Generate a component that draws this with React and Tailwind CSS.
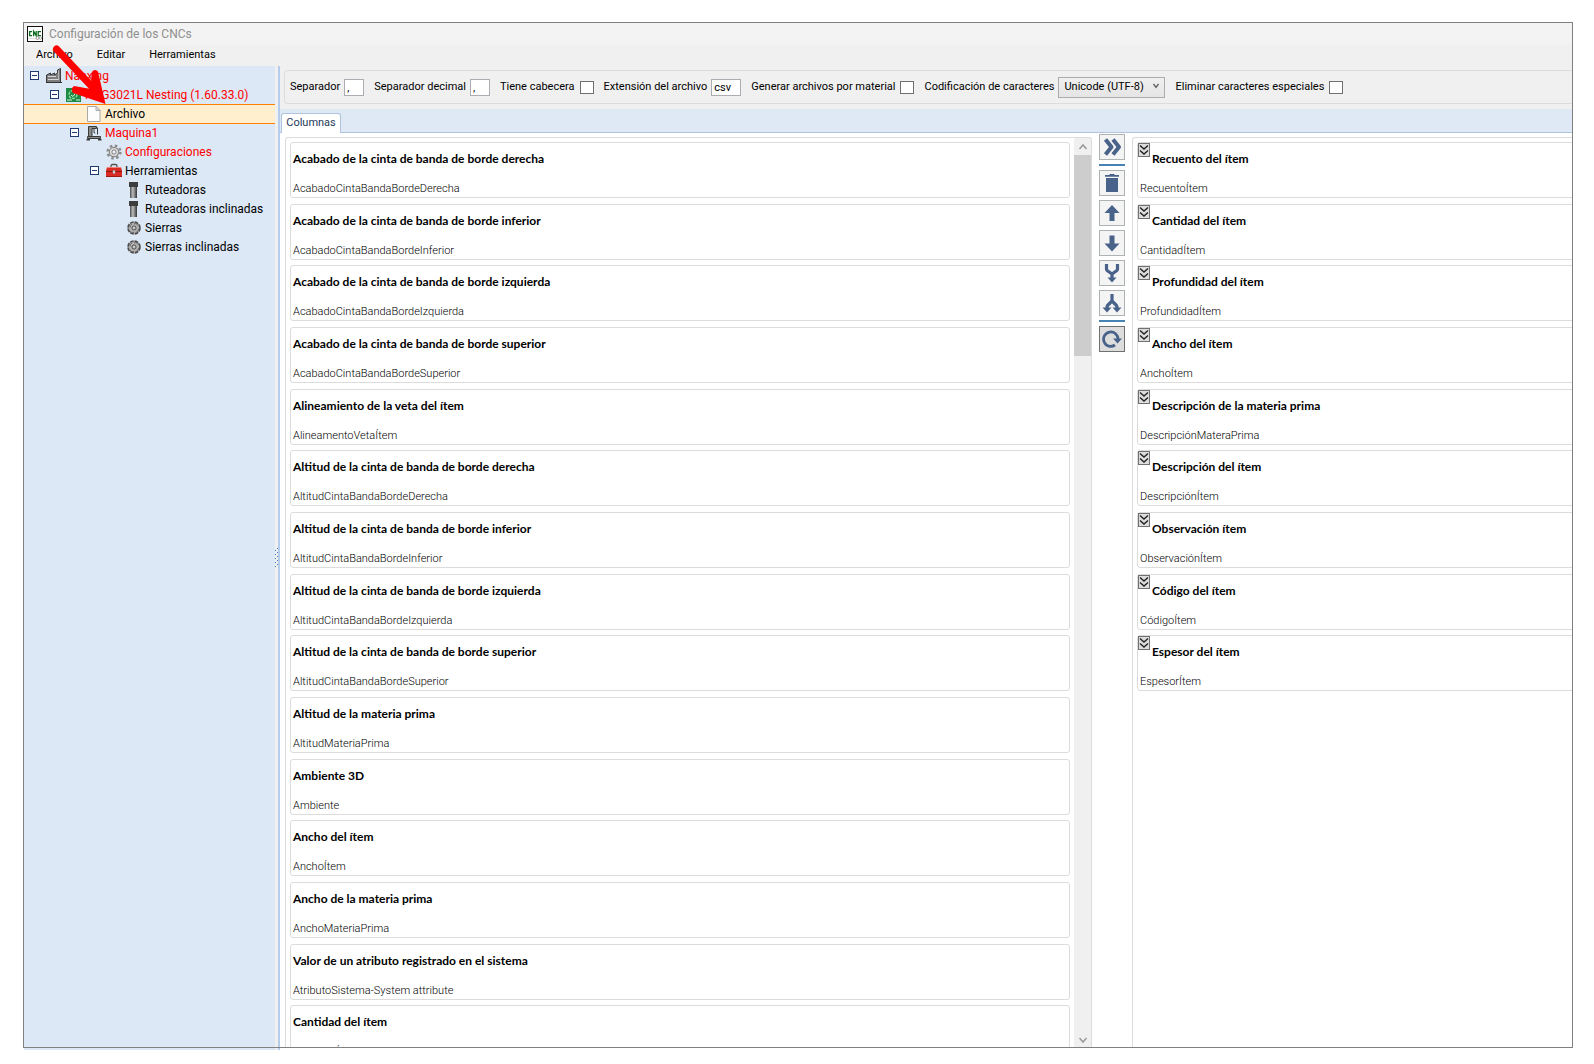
import { useState } from 'react'

const COLUMNS = [
    ['Acabado de la cinta de banda de borde derecha', 'AcabadoCintaBandaBordeDerecha'],
    ['Acabado de la cinta de banda de borde inferior', 'AcabadoCintaBandaBordeInferior'],
    ['Acabado de la cinta de banda de borde izquierda', 'AcabadoCintaBandaBordeIzquierda'],
    ['Acabado de la cinta de banda de borde superior', 'AcabadoCintaBandaBordeSuperior'],
    ['Alineamiento de la veta del ítem', 'AlineamentoVetaÍtem'],
    ['Altitud de la cinta de banda de borde derecha', 'AltitudCintaBandaBordeDerecha'],
    ['Altitud de la cinta de banda de borde inferior', 'AltitudCintaBandaBordeInferior'],
    ['Altitud de la cinta de banda de borde izquierda', 'AltitudCintaBandaBordeIzquierda'],
    ['Altitud de la cinta de banda de borde superior', 'AltitudCintaBandaBordeSuperior'],
    ['Altitud de la materia prima', 'AltitudMateriaPrima'],
    ['Ambiente 3D', 'Ambiente'],
    ['Ancho del ítem', 'AnchoÍtem'],
    ['Ancho de la materia prima', 'AnchoMateriaPrima'],
    ['Valor de un atributo registrado en el sistema', 'AtributoSistema-System attribute'],
    ['Cantidad del ítem', 'CantidadÍtem'],
]

const SELECTED = [
    ['Recuento del ítem', 'RecuentoÍtem'],
    ['Cantidad del ítem', 'CantidadÍtem'],
    ['Profundidad del ítem', 'ProfundidadÍtem'],
    ['Ancho del ítem', 'AnchoÍtem'],
    ['Descripción de la materia prima', 'DescripciónMateraPrima'],
    ['Descripción del ítem', 'DescripciónÍtem'],
    ['Observación ítem', 'ObservaciónÍtem'],
    ['Código del ítem', 'CódigoÍtem'],
    ['Espesor del ítem', 'EspesorÍtem'],
]

function AppIcon() {
    return (
        <svg viewBox="0 0 16 16" className="size-4 shrink-0">
            <rect x="0.5" y="0.5" width="15" height="15" fill="#fff" stroke="#111" />
            <g fill="none" stroke="#0a6b1c" strokeWidth="1.3">
                <path d="M5 5.6H2.6v4H5M6.6 10.2V5.4l2.6 4.2V5M14 5.6h-2.8v4H14" />
            </g>
            <circle cx="10.5" cy="12" r="1.5" fill="none" stroke="#999" />
            <circle cx="13.4" cy="12" r="1.3" fill="none" stroke="#aaa" />
            <path d="M1.5 12.5h7" stroke="#bbb" strokeDasharray="1 1" />
        </svg>
    )
}

function FactoryIcon() {
    return (
        <svg viewBox="0 0 16 16" className="size-4 shrink-0">
            <path d="M0.5 14.5V7l4-2v2l4-2v2l3-2V2l3-1.5v14z" fill="#7d7d7d" stroke="#3d3d3d" />
            <path d="M2 8.5h8M2 11.5h11" stroke="#d8d8d8" />
            <path d="M12.5 2.5v9" stroke="#b5b5b5" />
            <path d="M0 14.5h16" stroke="#333" />
        </svg>
    )
}

function CncIcon() {
    return (
        <svg viewBox="0 0 16 16" className="size-4 shrink-0">
            <rect y="1" width="15" height="14" fill="#1d8a43" />
            <circle cx="7" cy="7.5" r="4" fill="none" stroke="#8fe0a8" strokeWidth="1.3" strokeDasharray="3 1" />
            <path d="M5 8l2 1.5 3-4M1 13h5M10 13h4M11 2h3" fill="none" stroke="#d8f5e0" />
        </svg>
    )
}

function FileIcon() {
    return (
        <svg viewBox="0 0 16 16" className="size-4 shrink-0">
            <path d="M1.5 0.5h8.5l4 4v11h-12.5z" fill="#fdfdfd" stroke="#a9a9a9" />
            <path d="M10 0.5v4h4z" fill="#e4e4e4" stroke="#a9a9a9" />
        </svg>
    )
}

function MachineIcon() {
    return (
        <svg viewBox="0 0 16 16" className="size-4 shrink-0">
            <path d="M2.5 1.5h8v2H6v8H2.5z" fill="#8a8a8a" stroke="#3a3a3a" />
            <path d="M8 3.5v4M11.5 2.5v7M8 7l1 1.5" fill="none" stroke="#3a3a3a" />
            <path d="M1.5 11.5h13v2h-13z" fill="#8a8a8a" stroke="#3a3a3a" />
            <path d="M0.5 14h3.5v1.5H0.5zM12 14h3.5v1.5H12z" fill="#3a3a3a" />
        </svg>
    )
}

function GearIcon() {
    return (
        <svg viewBox="0 0 16 16" className="size-4 shrink-0">
            <circle cx="8" cy="8" r="6.4" fill="none" stroke="#8a8a8a" strokeWidth="2.4" strokeDasharray="2.5 2.53" />
            <circle cx="8" cy="8" r="4.7" fill="#dcdcdc" stroke="#8a8a8a" strokeWidth="1.2" />
            <circle cx="8" cy="8" r="2.1" fill="#eef3fa" stroke="#808080" />
        </svg>
    )
}

function ToolboxIcon() {
    return (
        <svg viewBox="0 0 16 16" className="size-4 shrink-0">
            <path d="M5 4.5V3q0-1.5 1.5-1.5h3q1.5 0 1.5 1.5v1.5" fill="none" stroke="#555" strokeWidth="1.3" />
            <path d="M1 4h14l1 4v6H0V8z" fill="#d92b22" />
            <path d="M1 4.500h14" stroke="#f08078" />
            <path d="M0 8.500h16" stroke="#8f150f" />
            <path d="M0 13.500h16" stroke="#9e1811" />
            <rect x="7" y="7.5" width="2" height="3" fill="#e8e8e8" stroke="#8d8d8d" strokeWidth="0.5" />
        </svg>
    )
}

function RouterIcon() {
    return (
        <svg viewBox="0 0 16 16" className="size-4 shrink-0">
            <defs>
                <linearGradient id="steel">
                    <stop offset="0" stopColor="#4a4a4a" />
                    <stop offset="0.4" stopColor="#bdbdbd" />
                    <stop offset="1" stopColor="#333" />
                </linearGradient>
            </defs>
            <rect x="4" y="4" width="7" height="12" fill="url(#steel)" />
            <rect x="3" y="0" width="9" height="5" fill="#3c3c3c" />
        </svg>
    )
}

function SawIcon() {
    return (
        <svg viewBox="0 0 16 16" className="size-4 shrink-0">
            <circle cx="8" cy="8" r="6" fill="#b0b0b0" stroke="#4a4a4a" strokeWidth="1.6" strokeDasharray="3.7 1" />
            <path d="M8 4c2-1 3 0 4 1.5M4 7.5c0-2 1-3 2-3.5M12.5 9c0 2-1 3-3 3.5M4 11c1 1.5 2 2 4 1.5" fill="none" stroke="#666" />
            <circle cx="8" cy="8" r="2" fill="#f2f2f2" stroke="#444" />
            <circle cx="8" cy="8" r="0.6" fill="#444" />
        </svg>
    )
}

const TREE = [
    { label: 'Nanxing', indent: 'pl-[6px]', icon: FactoryIcon, open: true, red: true },
    { label: 'NCG3021L Nesting (1.60.33.0)', indent: 'pl-[26px]', icon: CncIcon, open: true, red: true },
    { label: 'Archivo', indent: 'pl-[62px]', icon: FileIcon, selected: true },
    { label: 'Maquina1', indent: 'pl-[46px]', icon: MachineIcon, open: true, red: true },
    { label: 'Configuraciones', indent: 'pl-[82px]', icon: GearIcon, red: true },
    { label: 'Herramientas', indent: 'pl-[66px]', icon: ToolboxIcon, open: true },
    { label: 'Ruteadoras', indent: 'pl-[102px]', icon: RouterIcon },
    { label: 'Ruteadoras inclinadas', indent: 'pl-[102px]', icon: RouterIcon },
    { label: 'Sierras', indent: 'pl-[102px]', icon: SawIcon },
    { label: 'Sierras inclinadas', indent: 'pl-[102px]', icon: SawIcon },
]

function TreeRow({ node }) {
    const Icon = node.icon
    return (
        <li
            className={`flex items-center gap-[3px] text-[12px] ${node.indent} ${
                node.selected ? 'h-5 -mb-px border-y border-[#ff8000] bg-[#ffefce]' : 'h-[19px]'
            } ${node.red ? 'text-[#ff0000]' : 'text-black'}`}
        >
            {node.open && (
                <button aria-label={`Contraer ${node.label}`} className="mr-1 flex size-[9px] items-center justify-center border border-[#1f3a6e] bg-white">
                    <span className="h-px w-[5px] bg-[#1f3a6e]" />
                </button>
            )}
            <Icon />
            <span className="whitespace-nowrap">{node.label}</span>
        </li>
    )
}

function TextField({ id, label, value, width }) {
    return (
        <div className="flex items-center gap-1">
            <label htmlFor={id}>{label}</label>
            <input id={id} defaultValue={value} className={`h-[17px] border border-[#abadb3] bg-white px-[2px] ${width}`} />
        </div>
    )
}

function CheckField({ id, label }) {
    return (
        <div className="flex items-center gap-[5px]">
            <label htmlFor={id}>{label}</label>
            <input id={id} type="checkbox" className="h-[13px] w-[14px] appearance-none border border-[#707070] bg-white checked:bg-[#49628a]" />
        </div>
    )
}

function ToolButton({ label, active, children }) {
    return (
        <button
            aria-label={label}
            className={`flex size-[26px] items-center justify-center border ${
                active ? 'border-[#707070] bg-[#dddddd]' : 'border-[#adb2b5] bg-[#f4f4f4]'
            }`}
        >
            <svg viewBox="0 0 20 20" className="size-5" fill="none" stroke="#49628a" strokeWidth="3.2">
                {children}
            </svg>
        </button>
    )
}

function ColumnCard({ title, code, expandable }) {
    return (
        <li className="h-14 rounded-[3px] border border-[#dcdcdc] bg-white px-[2px] nth-[3n+2]:-mb-px">
            <div className="flex h-[31px] items-start">
                {expandable && (
                    <button aria-label={`Expandir ${title}`} className="-ml-[2px] mr-[2px] flex h-[14px] w-3 shrink-0 items-center justify-center border border-[#707070] bg-[#dddddd]">
                        <svg viewBox="0 0 10 12" className="h-3 w-[10px]" fill="none" stroke="#222" strokeWidth="1.4">
                            <path d="M1 1.5l4 3.5 4-3.5M1 6.5l4 3.5 4-3.5" />
                        </svg>
                    </button>
                )}
                <h3 className="pt-2 font-['Lato','Open_Sans',sans-serif] text-[12px] leading-4 font-bold whitespace-nowrap">{title}</h3>
            </div>
            <p className="pt-[7px] text-[11px] leading-4 font-light whitespace-nowrap">{code}</p>
        </li>
    )
}

function ScrollArrow({ label, d }) {
    return (
        <button aria-label={label} className="flex h-[17px] w-[17px] shrink-0 items-center justify-center">
            <svg viewBox="0 0 10 10" className="size-[10px]" fill="none" stroke="#999" strokeWidth="1.5">
                <path d={d} />
            </svg>
        </button>
    )
}

export default function App() {
    const [encoding, setEncoding] = useState('utf8')

    return (
        <div className="h-screen overflow-hidden bg-white pt-[22px] pr-[21px] pb-4 pl-[23px] font-['Roboto','Open_Sans',sans-serif] text-black">
            <div className="relative flex h-full flex-col px-px pt-px">
                {/* Title bar */}
                <header className="flex h-[22px] items-center gap-[6px] bg-[#f3f3f3] pl-[3px] text-[12px] text-[#8f8f8f]">
                    <AppIcon />
                    <h1>Configuración de los CNCs</h1>
                </header>

                {/* Menu */}
                <nav className="flex h-[21px] items-center gap-6 bg-[#f0f0f0] pl-3 text-[11px]">
                    <button>Archivo</button>
                    <button>Editar</button>
                    <button>Herramientas</button>
                </nav>

                <div className="flex min-h-0 flex-1">
                    {/* Tree */}
                    <aside className="-mb-[2px] w-[251px] shrink-0 bg-[#dce8f6]">
                        <ul>
                            {TREE.map((node) => (
                                <TreeRow key={node.label} node={node} />
                            ))}
                        </ul>
                    </aside>

                    {/* Splitter */}
                    <div className="-mb-[2px] flex w-[5px] shrink-0 items-center border-r-2 border-[#b5cdec] bg-[#f0f0f0]">
                        <svg viewBox="0 0 3 20" className="h-5 w-[3px]" fill="#3a76c4">
                            {[0, 4, 8, 12, 16].map((y) => (
                                <g key={y}>
                                    <rect x="0" y={y + 2} width="1" height="1" />
                                    <rect x="2" y={y} width="1" height="1" />
                                </g>
                            ))}
                        </svg>
                    </div>

                    <main className="flex min-w-0 flex-1 flex-col overflow-hidden">
                        {/* File options */}
                        <div className="bg-[#f0f0f0] pt-1 pb-[5px] pl-1">
                            <form className="flex h-[34px] items-center gap-[10px] rounded-l-[4px] border border-r-0 border-[#dcdcdc] pl-[5px] text-[11px] whitespace-nowrap">
                                <TextField id="sep" label="Separador" value="," width="w-5" />
                                <TextField id="dec" label="Separador decimal" value="," width="w-5" />
                                <CheckField id="header" label="Tiene cabecera" />
                                <TextField id="ext" label="Extensión del archivo" value="csv" width="w-[30px]" />
                                <CheckField id="material" label="Generar archivos por material" />
                                <div className="flex items-center gap-1">
                                    <label htmlFor="enc">Codificación de caracteres</label>
                                    <div className="relative">
                                        <select
                                            id="enc"
                                            value={encoding}
                                            onChange={(e) => setEncoding(e.target.value)}
                                            className="h-[21px] w-[107px] appearance-none border border-[#acacac] bg-linear-to-b from-[#f0f0f0] to-[#e5e5e5] pl-[5px]"
                                        >
                                            <option value="utf8">Unicode (UTF-8)</option>
                                        </select>
                                        <svg viewBox="0 0 6 6" className="pointer-events-none absolute top-[6px] right-[6px] size-[6px]" fill="none" stroke="#606060" strokeWidth="1.3">
                                            <path d="M0.5 1L3 4.5 5.5 1" />
                                        </svg>
                                    </div>
                                </div>
                                <CheckField id="special" label="Eliminar caracteres especiales" />
                            </form>
                        </div>

                        {/* Tabs */}
                        <div role="tablist" className="flex h-6 shrink-0 items-end border-b border-[#b0c4de] bg-[#dfe8f5] pl-px">
                            <button role="tab" aria-selected="true" className="-mb-px h-5 w-[60px] rounded-t-[3px] border border-b-0 border-[#b0c4de] bg-white text-[11px] text-[#1e395b]">
                                Columnas
                            </button>
                        </div>

                        <div className="flex min-h-0 flex-1 items-stretch pt-1 pl-[5px]">
                            {/* Available columns */}
                            <section className="flex min-w-0 flex-1 overflow-hidden rounded-t-[3px] border border-b-0 border-[#dcdcdc]">
                                <ul className="flex min-w-0 flex-1 flex-col gap-[6px] overflow-hidden pt-1 pr-1 pl-1 *:shrink-0">
                                    {COLUMNS.map(([title, code]) => (
                                        <ColumnCard key={title} title={title} code={code} />
                                    ))}
                                </ul>
                                <div className="flex w-[17px] shrink-0 flex-col bg-[#f0f0f0]">
                                    <ScrollArrow label="Subir" d="M1.5 7L5 3l3.5 4" />
                                    <div className="flex-1">
                                        <div className="h-[23%] bg-[#cdcdcd]" />
                                    </div>
                                    <ScrollArrow label="Bajar" d="M1.5 3L5 7l3.5-4" />
                                </div>
                            </section>

                            {/* Actions */}
                            <div className="-mt-[3px] flex w-[40px] shrink-0 flex-col items-center gap-1">
                                <ToolButton label="Agregar">
                                    <path d="M3.5 2.5l6 7.5-6 7.5M11 2.5l6 7.5-6 7.5" strokeWidth="4" strokeLinejoin="round" />
                                </ToolButton>
                                <div className="h-[2px] w-[26px] bg-[#4682b4]" />
                                <ToolButton label="Eliminar">
                                    <path d="M4 5h12v14H4zM3 2h4l1-1h4l1 1h4v1.8H3z" fill="#49628a" stroke="none" />
                                </ToolButton>
                                <ToolButton label="Mover arriba">
                                    <path d="M10 2l7.5 8h-5v8h-5v-8h-5z" fill="#49628a" stroke="none" />
                                </ToolButton>
                                <ToolButton label="Mover abajo">
                                    <path d="M10 18.5l7.5-8h-5v-8h-5v8h-5z" fill="#49628a" stroke="none" />
                                </ToolButton>
                                <ToolButton label="Unir">
                                    <path d="M4.5 1v5q0 1 1 1.8L10 11l4.5-3.2q1-.8 1-1.8V1M10 10v6" />
                                    <path d="M5.5 14.5h9L10 19.5z" fill="#49628a" stroke="none" />
                                </ToolButton>
                                <ToolButton label="Separar">
                                    <path d="M10 1v8M10 8l-4 4q-1 1-1 2v2M10 8l4 4q1 1 1 2v2" />
                                    <path d="M0.5 14.5h9L5 19.5zM10.5 14.5h9L15 19.5z" fill="#49628a" stroke="none" />
                                </ToolButton>
                                <div className="h-[2px] w-[26px] bg-[#4682b4]" />
                                <ToolButton label="Restablecer" active>
                                    <path d="M13 16A7.2 7.2 0 1 1 16 10.5" strokeWidth="2.8" />
                                    <path d="M11 9.5h9l-4.5 5z" fill="#49628a" stroke="none" />
                                </ToolButton>
                            </div>

                            {/* Selected columns */}
                            <section className="w-[440px] shrink-0 overflow-hidden rounded-tl-[3px] border-t border-l border-[#dcdcdc] pt-1 pl-1">
                                <ul className="-mr-1 flex flex-col gap-[6px] *:shrink-0">
                                    {SELECTED.map(([title, code]) => (
                                        <ColumnCard key={title} title={title} code={code} expandable />
                                    ))}
                                </ul>
                            </section>
                        </div>
                    </main>
                </div>

                {/* Window frame */}
                <div className="pointer-events-none absolute inset-0 border border-[#808080]" />

                {/* Pointer to the selected file node */}
                <svg viewBox="0 0 60 64" className="pointer-events-none absolute top-[22px] left-[28px] h-16 w-[60px]">
                    <path d="M5.5 5L46 48" fill="none" stroke="#f00" strokeWidth="7" strokeLinecap="round" />
                    <path d="M40.5 29q2-5 6.5-1.5L54.5 60 22 49q-3-4 1-7l17 3z" fill="#f00" />
                </svg>
            </div>
        </div>
    )
}
